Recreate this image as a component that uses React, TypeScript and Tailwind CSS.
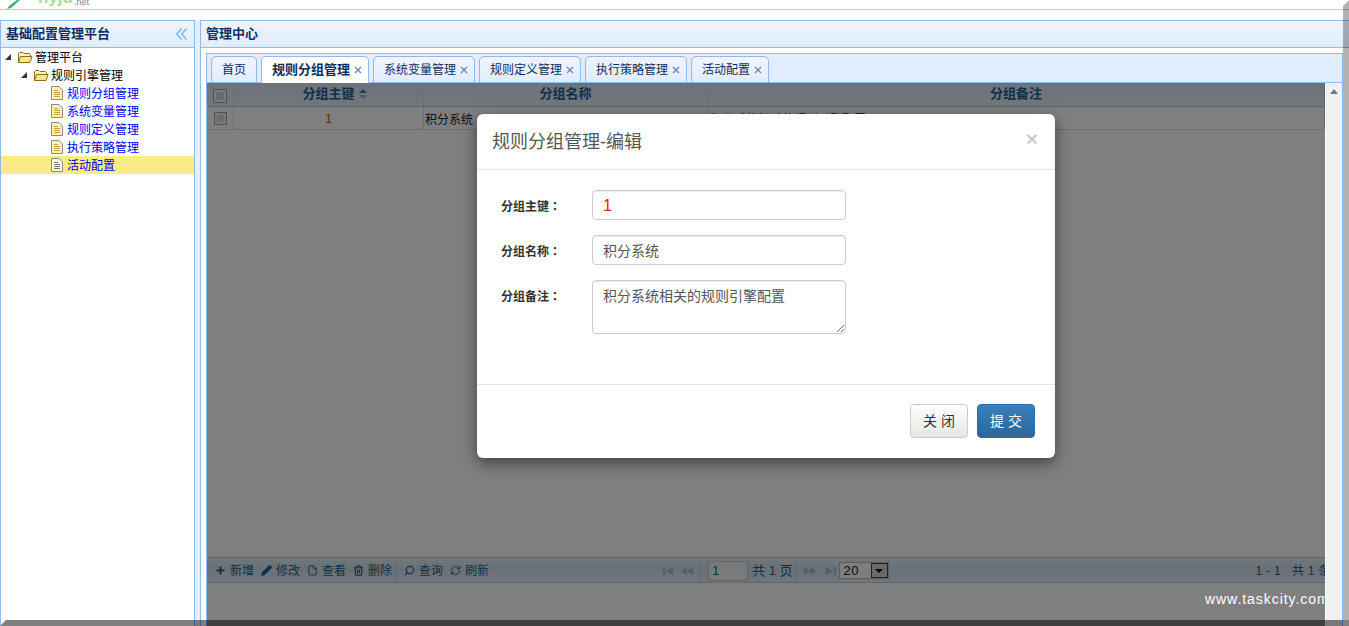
import { Plus, Pencil, File, Trash2, Search, RefreshCw } from 'lucide-react'

const font = "font-['Liberation_Sans','Noto_Sans_CJK_SC',sans-serif]"

function Expander() {
  return (
    <svg width="6" height="6" viewBox="0 0 6 6" className="shrink-0">
      <polygon points="6,0 6,6 0,6" fill="#333" />
    </svg>
  )
}

function FolderIcon() {
  return (
    <svg width="16" height="13" viewBox="0 0 16 13" className="shrink-0">
      <path d="M1.5 11.5V2.5L2.5 1.5H6L7 2.5H12.5L13.5 3.5V5" fill="#fff3b8" stroke="#8a6d1f" />
      <path d="M1.5 11.5L3.5 5.5H15L13 11.5Z" fill="#fce58a" stroke="#8a6d1f" />
    </svg>
  )
}

function LeafIcon({ plain }: { plain?: boolean }) {
  return (
    <svg width="12" height="14" viewBox="0 0 12 14" className="shrink-0">
      <path d="M.5.5H8L11.5 4V13.5H.5Z" fill={plain ? '#fffbe8' : '#fdf0b4'} stroke="#8b8b8b" />
      <path d="M3 4.5H7M3 6.5H9M3 8.5H9M3 10.5H9" stroke={plain ? '#777' : '#c9a24d'} />
    </svg>
  )
}

const leaves = ['规则分组管理', '系统变量管理', '规则定义管理', '执行策略管理', '活动配置']

function Tree() {
  return (
    <div className="text-[12px] leading-[18px]">
      <div className="flex items-center h-[18px] pl-[4px]">
        <Expander />
        <div className="ml-[6px]"><FolderIcon /></div>
        <span className="ml-[2px] pt-[2px] text-black">管理平台</span>
      </div>
      <div className="flex items-center h-[18px] pl-[20px]">
        <Expander />
        <div className="ml-[6px]"><FolderIcon /></div>
        <span className="ml-[2px] pt-[2px] text-black">规则引擎管理</span>
      </div>
      {leaves.map((name, i) => (
        <div key={name} className={`flex items-center h-[18px] pl-[50px] ${i === 4 ? 'bg-[#fbec88]' : ''}`}>
          <LeafIcon plain={i === 4} />
          <span className="ml-[4px] pt-[2px] text-[#0000ff]">{name}</span>
        </div>
      ))}
    </div>
  )
}

const tabs = [
  { name: '首页', closable: false },
  { name: '规则分组管理', closable: true, active: true },
  { name: '系统变量管理', closable: true },
  { name: '规则定义管理', closable: true },
  { name: '执行策略管理', closable: true },
  { name: '活动配置', closable: true },
]

function Tabs() {
  return (
    <div className="h-[29px] shrink-0 bg-[#e0ecff] border-b border-[#95b8e7] flex items-end gap-[4px] pl-[4px]">
      {tabs.map((t) => (
        <div
          key={t.name}
          className={`h-[27px] -mb-px flex items-center border border-[#95b8e7] rounded-t-[5px] pl-[10px] ${t.closable ? 'pr-[6px]' : 'pr-[10px]'} ${
            t.active
              ? 'bg-white border-b-white font-bold text-[13px] text-[#0e2d5f]'
              : 'bg-gradient-to-b from-[#eff5ff] to-[#e0ecff] text-[12px] text-[#0e2d5f]'
          }`}
        >
          <span className="leading-[14px]">{t.name}</span>
          {t.closable && (
            <svg width="8" height="8" viewBox="0 0 8 8" className="ml-[4px] mt-[1px]">
              <path d="M1 1L7 7M7 1L1 7" stroke="#6d87b0" strokeWidth="1.4" />
            </svg>
          )}
        </div>
      ))}
    </div>
  )
}

function CheckBox({ className }: { className: string }) {
  return (
    <div className={`${className} border border-[#a0a0a0] bg-[#f4f4f4] p-[2px]`}>
      <div className="w-full h-full bg-[#d8d8d8]" />
    </div>
  )
}

function Grid() {
  const cols = 'grid grid-cols-[27px_190px_284px_617px]'
  return (
    <div className="flex-1 min-h-0 bg-white text-[12px]">
      <div className={`${cols} h-[24px] bg-gradient-to-b from-[#dce4f2] to-[#e2f0f8] border-b border-[#b4cfe4] text-[13px] font-bold text-[#1a5f90]`}>
        <div className="border-r border-[#d0dfec] flex items-center justify-center pt-[2px]">
          <CheckBox className="w-[14px] h-[14px]" />
        </div>
        <div className="border-r border-[#d0dfec] flex items-center justify-center pb-[2px]">
          分组主键
          <svg width="8" height="10" viewBox="0 0 8 10" className="ml-[4px] -mr-[12px]">
            <path d="M4 0L8 4H0Z" fill="#2c80bc" />
            <path d="M4 10L8 6H0Z" fill="#a9b8c6" />
          </svg>
        </div>
        <div className="border-r border-[#d0dfec] flex items-center justify-center pb-[2px]">分组名称</div>
        <div className="border-r border-[#b4cfe4] flex items-center justify-center pb-[2px]">分组备注</div>
      </div>
      <div className={`${cols} h-[23px] bg-white border-b border-[#dcdcdc] text-[12px] text-[#222]`}>
        <div className="border-r border-[#dcdcdc] flex items-center justify-center">
          <CheckBox className="w-[13px] h-[13px]" />
        </div>
        <div className="border-r border-[#dcdcdc] flex items-center justify-center pt-[2px] text-[#c05a12]">1</div>
        <div className="border-r border-[#dcdcdc] flex items-center pl-[1px] pt-[3px]">积分系统</div>
        <div className="border-r border-[#dcdcdc] flex items-center pl-[2px] pt-[3px]">积分系统相关的规则引擎配置</div>
      </div>
    </div>
  )
}

const toolItems = [
  { label: '新增', icon: <Plus size={11} strokeWidth={4} />, w: 'w-[46px]' },
  { label: '修改', icon: <Pencil size={11} strokeWidth={3} className="fill-current" />, w: 'w-[46px]' },
  { label: '查看', icon: <File size={11} strokeWidth={2} />, w: 'w-[46px]' },
  { label: '删除', icon: <Trash2 size={11} strokeWidth={2.6} />, w: 'w-[42px]' },
]

const toolItems2 = [
  { label: '查询', icon: <Search size={11} strokeWidth={2.6} className="-scale-x-100" /> },
  { label: '刷新', icon: <RefreshCw size={11} strokeWidth={2} /> },
]

function ToolItem({ label, icon, className }: { label: string; icon: React.ReactNode; className?: string }) {
  return (
    <div className={`shrink-0 flex items-center gap-[4px] ${className ?? ''}`}>
      <span className="w-[11px] flex justify-center">{icon}</span>
      <span>{label}</span>
    </div>
  )
}

function PagerGlyph({ d }: { d: string }) {
  return (
    <svg width="12" height="8" viewBox="0 0 12 8" className="shrink-0">
      <path d={d} fill="#a7bccd" />
    </svg>
  )
}

function Toolbar() {
  return (
    <div className="h-[26px] shrink-0 flex items-center overflow-hidden whitespace-nowrap pl-[8px] pt-[1px] rounded-bl-[4px] border-y border-[#b4cfe4] bg-gradient-to-b from-[#e0f0f8] via-[#d4e2ec] to-[#e2eef6] text-[12px] text-[#1f6090]">
      {toolItems.map((t) => (
        <ToolItem key={t.label} label={t.label} icon={t.icon} className={t.w} />
      ))}
      <div className="w-[2px] h-[18px] shrink-0 bg-[#cbdbe6] mr-[7px]" />
      <div className="flex shrink-0 gap-[7px]">
        {toolItems2.map((t) => (
          <ToolItem key={t.label} label={t.label} icon={t.icon} />
        ))}
      </div>
      <div className="flex shrink-0 items-center ml-[173px]">
        <PagerGlyph d="M1 0H3V8H1ZM11 0V8L4 4Z" />
        <div className="ml-[7px]"><PagerGlyph d="M6 0V8L0 4ZM12 0V8L6 4Z" /></div>
        <div className="w-[2px] h-[18px] bg-[#cbdbe6] ml-[6px] mr-[7px]" />
        <div className="w-[40px] h-[20px] bg-[#f4f4f4] border border-[#c8c8c8] pl-[3px] leading-[18px] text-[13px]">1</div>
        <span className="ml-[4px] text-[13px]">共 1 页</span>
        <div className="w-[2px] h-[18px] bg-[#cbdbe6] ml-[3px] mr-[6px]" />
        <PagerGlyph d="M0 0V8L6 4ZM6 0V8L12 4Z" />
        <div className="ml-[9px]"><PagerGlyph d="M1 0V8L8 4ZM9 0H11V8H9Z" /></div>
        <div className="ml-[2px] w-[50px] h-[17px] flex border border-[#b8b8b8] bg-[#fafafa] text-[#111] text-[13px] tracking-[0.5px] leading-[15px]">
          <span className="flex-1 pl-[4px]">20</span>
          <div className="w-[17px] h-full bg-[#d4d4d4] border border-[#444] flex items-center justify-center">
            <svg width="8" height="4" viewBox="0 0 8 4"><path d="M0 0H8L4 4Z" fill="#000" /></svg>
          </div>
        </div>
      </div>
      <span className="ml-[367px] shrink-0 text-[12px] tracking-[0.3px]">1 - 1&nbsp;&nbsp;&nbsp;共 1 条</span>
    </div>
  )
}

function Field({ label, children }: { label: string; children: React.ReactNode }) {
  return (
    <div className="flex">
      <div className="w-[91px] pt-[9px] text-[12px] leading-[14px] font-bold text-[#333]">
        {label}
        <span className="font-['Noto_Sans_CJK_TC',sans-serif]">：</span>
      </div>
      {children}
    </div>
  )
}

const inputCls = 'w-[254px] border border-[#ccc] rounded-[4px] bg-white px-[10px] text-[14px] text-[#555] outline-none shadow-[inset_0_1px_1px_rgba(0,0,0,0.075)]'

function Modal() {
  return (
    <div className="w-[578px] h-[344px] bg-white rounded-[6px] shadow-[0_5px_15px_rgba(0,0,0,0.5)] flex flex-col">
      <div className="h-[56px] shrink-0 border-b border-[#e5e5e5] flex items-center justify-between pl-[15px] pr-[17px]">
        <span className="text-[18px] text-[#555] leading-[20px]">规则分组管理-编辑</span>
        <span className="text-[21px] font-bold text-[#ccc] leading-[20px] -mt-[6px]">×</span>
      </div>
      <div className="h-[214px] shrink-0 pt-[20px] pl-[24px] flex flex-col gap-[15px]">
        <Field label="分组主键">
          <input readOnly value="1" className={`${inputCls} h-[30px] pt-[2px] !text-[16px] !text-[#e02020]`} />
        </Field>
        <Field label="分组名称">
          <input readOnly value="积分系统" className={`${inputCls} h-[30px]`} />
        </Field>
        <Field label="分组备注">
          <textarea readOnly value="积分系统相关的规则引擎配置" className={`${inputCls} h-[54px] pt-[5px] leading-[20px]`} />
        </Field>
      </div>
      <div className="border-t border-[#e5e5e5] flex-1 flex justify-end items-start gap-[9px] pt-[19px] pr-[20px] text-[14px]">
        <div className="w-[58px] h-[34px] rounded-[4px] border border-[#ccc] bg-gradient-to-b from-white to-[#e6e6e6] flex items-center justify-center pl-[4px] text-[#333] tracking-[4px]">关闭</div>
        <div className="w-[58px] h-[34px] rounded-[4px] border border-[#2e6da4] bg-gradient-to-b from-[#3a80bd] to-[#2b669a] flex items-center justify-center pl-[4px] text-white tracking-[4px]">提交</div>
      </div>
    </div>
  )
}

export default function App() {
  return (
    <div className={`${font} relative h-[626px] w-full overflow-hidden bg-white flex flex-col`}>
      {/* logo strip, cut off by the top of the window */}
      <div className="h-[10px] shrink-0 border-b border-[#b3d0e4] overflow-hidden flex pl-[6px]">
        <svg width="15" height="9" viewBox="0 0 15 9" className="shrink-0">
          <path d="M1 9L3 6L11 0H14L5 8Z" fill="#3fb26c" />
        </svg>
        <div className="ml-[17px] -mt-[11px] text-[17px] leading-[17px] font-bold text-[#a9dc96]">hyju</div>
        <div className="-mt-[3px] ml-px text-[9px] leading-[10px] text-[#8a8a8a]">.net</div>
      </div>
      <div className="h-[10px] shrink-0" />

      <div className="flex-1 min-h-0 flex">
        <div className="w-[195px] shrink-0 border-x border-t border-[#95b8e7] flex flex-col">
          <div className="h-[27px] shrink-0 border-b border-[#95b8e7] bg-gradient-to-b from-[#eff5ff] to-[#e0ecff] flex items-center justify-between pl-[5px] pr-[7px]">
            <span className="text-[13px] font-bold text-[#0e2d5f]">基础配置管理平台</span>
            <svg width="11" height="12" viewBox="0 0 11 12" fill="none" stroke="#7ab8f0" strokeWidth="1.5">
              <path d="M5.5 .5L.8 6L5.5 11.5M10.5 .5L5.8 6L10.5 11.5" />
            </svg>
          </div>
          <Tree />
        </div>
        <div className="w-[5px] shrink-0 bg-[#e6eef8]" />
        <div className="flex-1 min-w-0 border-l border-t border-[#95b8e7] flex flex-col">
          <div className="h-[27px] shrink-0 border-b border-[#95b8e7] bg-gradient-to-b from-[#eff5ff] to-[#e0ecff] flex items-center pl-[5px]">
            <span className="text-[13px] font-bold text-[#0e2d5f]">管理中心</span>
          </div>
          <div className="flex-1 min-h-0 pt-[5px] pl-[5px] pr-[6px] flex flex-col">
            <div className="flex-1 min-h-0 border-x border-t border-[#95b8e7] flex flex-col">
              <Tabs />
              <div className="relative flex-1 min-h-0 flex">
                <div className="w-[1118px] shrink-0 flex flex-col">
                  <Grid />
                  <Toolbar />
                  <div className="h-[43px] shrink-0 bg-white" />
                </div>
                <div className="w-px shrink-0 bg-white" />
                <div className="flex-1 bg-[#f0f0f0] flex justify-center pt-[6px]">
                  <svg width="8" height="5" viewBox="0 0 8 5"><path d="M4 0L8 5H0Z" fill="#777" /></svg>
                </div>
                <div className="absolute left-0 top-0 bottom-0 w-[1118px] bg-black/50 flex justify-center pt-[31px]">
                  <Modal />
                </div>
              </div>
            </div>
          </div>
        </div>
      </div>

      {/* screenshot tool's drop shadow and watermark sit on top of the page */}
      <div className="absolute left-0 right-0 bottom-0 h-[6px] bg-black/50 [clip-path:polygon(6px_0,100%_0,100%_100%,0_100%)]" />
      <div className="absolute right-0 top-0 bottom-[6px] w-[6px] bg-black/30 [clip-path:polygon(100%_0,100%_100%,0_100%,0_6px)]" />
      <div className="absolute left-[1205px] top-[590px] text-[14px] leading-[18px] tracking-[0.95px] text-white whitespace-nowrap">www.taskcity.com</div>
    </div>
  )
}
